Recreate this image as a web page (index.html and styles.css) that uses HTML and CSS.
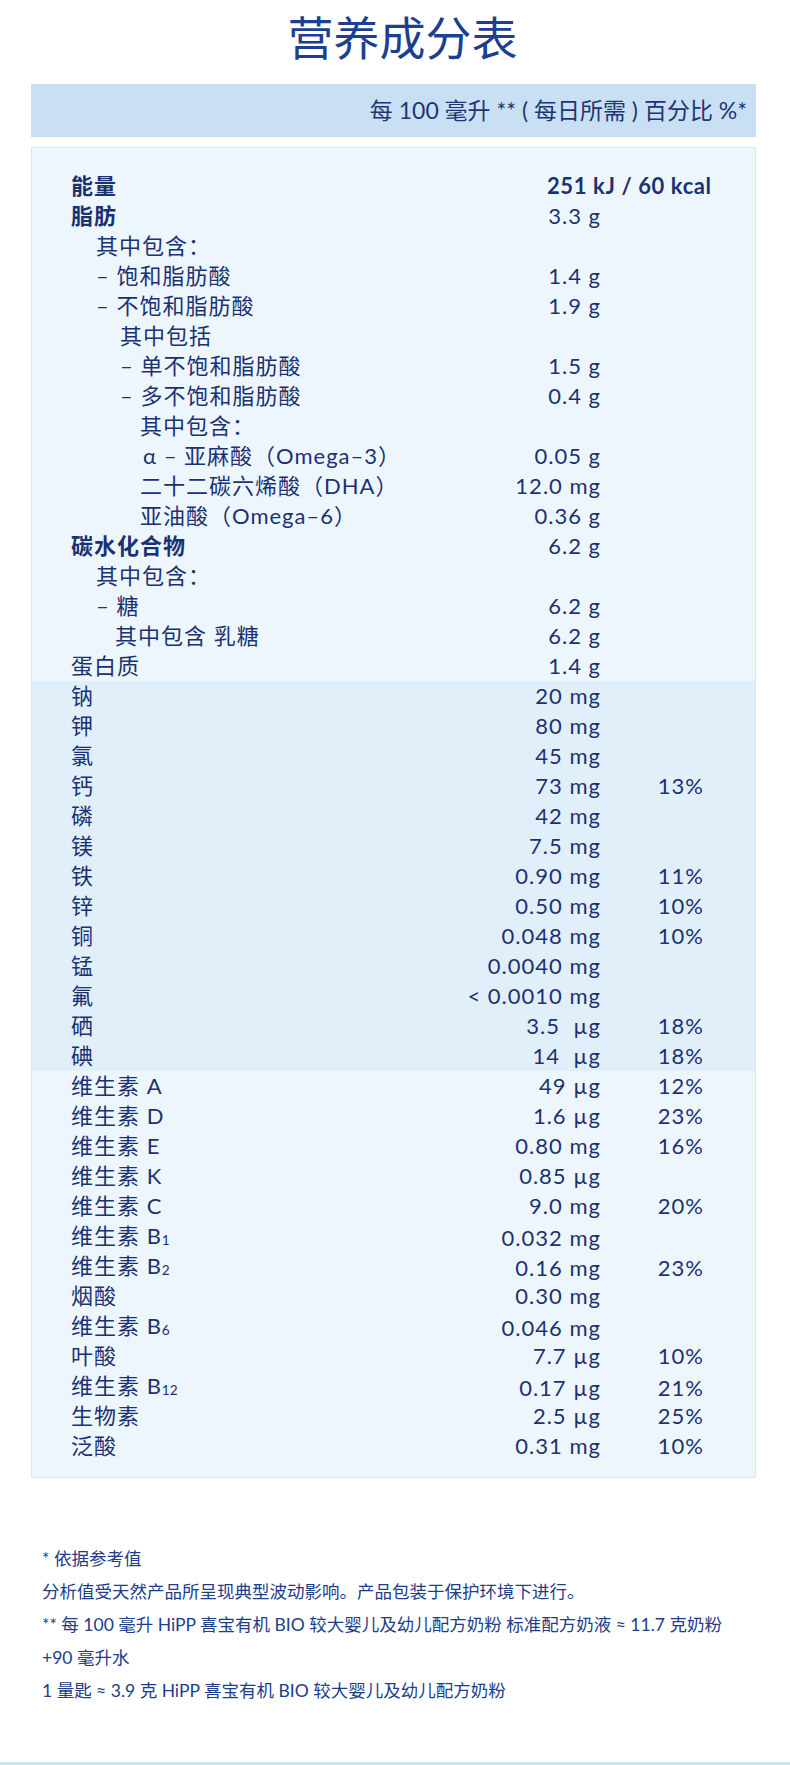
FILE: index.html
```html
<!DOCTYPE html>
<html lang="zh-CN">
<head>
<meta charset="utf-8">
<title>营养成分表</title>
<link rel="stylesheet" href="styles.css">
</head>
<body>
<div class="page">
  <h1 class="title">营养成分表</h1>
  <div class="head-bar">每 100 毫升 ** ( 每日所需 ) 百分比 %*</div>
  <div class="table">
    <div class="group">
      <div class="row bold"><span class="label">能量</span><span class="val energy">251 kJ / 60 kcal</span></div>
      <div class="row bold"><span class="label">脂肪</span><span class="val">3.3 g</span><span class="pct"></span></div>
      <div class="row"><span class="label i1">其中包含：</span><span class="val"></span><span class="pct"></span></div>
      <div class="row"><span class="label i1">– 饱和脂肪酸</span><span class="val">1.4 g</span><span class="pct"></span></div>
      <div class="row"><span class="label i1">– 不饱和脂肪酸</span><span class="val">1.9 g</span><span class="pct"></span></div>
      <div class="row"><span class="label i2">其中包括</span><span class="val"></span><span class="pct"></span></div>
      <div class="row"><span class="label i2">– 单不饱和脂肪酸</span><span class="val">1.5 g</span><span class="pct"></span></div>
      <div class="row"><span class="label i2">– 多不饱和脂肪酸</span><span class="val">0.4 g</span><span class="pct"></span></div>
      <div class="row"><span class="label i3">其中包含：</span><span class="val"></span><span class="pct"></span></div>
      <div class="row"><span class="label i3a">α – 亚麻酸（Omega–3）</span><span class="val">0.05 g</span><span class="pct"></span></div>
      <div class="row"><span class="label i3">二十二碳六烯酸（DHA）</span><span class="val">12.0 mg</span><span class="pct"></span></div>
      <div class="row"><span class="label i3">亚油酸（Omega–6）</span><span class="val">0.36 g</span><span class="pct"></span></div>
      <div class="row bold"><span class="label">碳水化合物</span><span class="val">6.2 g</span><span class="pct"></span></div>
      <div class="row"><span class="label i1">其中包含：</span><span class="val"></span><span class="pct"></span></div>
      <div class="row"><span class="label i1">– 糖</span><span class="val">6.2 g</span><span class="pct"></span></div>
      <div class="row"><span class="label i15">其中包含 乳糖</span><span class="val">6.2 g</span><span class="pct"></span></div>
      <div class="row"><span class="label">蛋白质</span><span class="val">1.4 g</span><span class="pct"></span></div>
    </div>
    <div class="group minerals">
      <div class="row"><span class="label">钠</span><span class="val">20 mg</span><span class="pct"></span></div>
      <div class="row"><span class="label">钾</span><span class="val">80 mg</span><span class="pct"></span></div>
      <div class="row"><span class="label">氯</span><span class="val">45 mg</span><span class="pct"></span></div>
      <div class="row"><span class="label">钙</span><span class="val">73 mg</span><span class="pct">13%</span></div>
      <div class="row"><span class="label">磷</span><span class="val">42 mg</span><span class="pct"></span></div>
      <div class="row"><span class="label">镁</span><span class="val">7.5 mg</span><span class="pct"></span></div>
      <div class="row"><span class="label">铁</span><span class="val">0.90 mg</span><span class="pct">11%</span></div>
      <div class="row"><span class="label">锌</span><span class="val">0.50 mg</span><span class="pct">10%</span></div>
      <div class="row"><span class="label">铜</span><span class="val">0.048 mg</span><span class="pct">10%</span></div>
      <div class="row"><span class="label">锰</span><span class="val">0.0040 mg</span><span class="pct"></span></div>
      <div class="row"><span class="label">氟</span><span class="val">&lt; 0.0010 mg</span><span class="pct"></span></div>
      <div class="row"><span class="label">硒</span><span class="val">3.5&nbsp; µg</span><span class="pct">18%</span></div>
      <div class="row"><span class="label">碘</span><span class="val">14&nbsp; µg</span><span class="pct">18%</span></div>
    </div>
    <div class="group">
      <div class="row"><span class="label">维生素 A</span><span class="val">49 µg</span><span class="pct">12%</span></div>
      <div class="row"><span class="label">维生素 D</span><span class="val">1.6 µg</span><span class="pct">23%</span></div>
      <div class="row"><span class="label">维生素 E</span><span class="val">0.80 mg</span><span class="pct">16%</span></div>
      <div class="row"><span class="label">维生素 K</span><span class="val">0.85 µg</span><span class="pct"></span></div>
      <div class="row"><span class="label">维生素 C</span><span class="val">9.0 mg</span><span class="pct">20%</span></div>
      <div class="row"><span class="label">维生素 B<span class="sub">1</span></span><span class="val">0.032 mg</span><span class="pct"></span></div>
      <div class="row"><span class="label">维生素 B<span class="sub">2</span></span><span class="val">0.16 mg</span><span class="pct">23%</span></div>
      <div class="row"><span class="label">烟酸</span><span class="val">0.30 mg</span><span class="pct"></span></div>
      <div class="row"><span class="label">维生素 B<span class="sub">6</span></span><span class="val">0.046 mg</span><span class="pct"></span></div>
      <div class="row"><span class="label">叶酸</span><span class="val">7.7 µg</span><span class="pct">10%</span></div>
      <div class="row"><span class="label">维生素 B<span class="sub">12</span></span><span class="val">0.17 µg</span><span class="pct">21%</span></div>
      <div class="row"><span class="label">生物素</span><span class="val">2.5 µg</span><span class="pct">25%</span></div>
      <div class="row"><span class="label">泛酸</span><span class="val">0.31 mg</span><span class="pct">10%</span></div>
    </div>
  </div>
  <div class="notes">
    <p>* 依据参考值</p>
    <p>分析值受天然产品所呈现典型波动影响。产品包装于保护环境下进行。</p>
    <p>** 每 100 毫升 HiPP 喜宝有机 BIO 较大婴儿及幼儿配方奶粉 标准配方奶液 ≈ 11.7 克奶粉<br>+90 毫升水</p>
    <p>1 量匙 ≈ 3.9 克 HiPP 喜宝有机 BIO 较大婴儿及幼儿配方奶粉</p>
  </div>
</div>
<div class="bottom-bar"></div>
</body>
</html>
```

FILE: styles.css
```css
html, body {
  margin: 0;
  padding: 0;
  background: #ffffff;
}

body {
  width: 790px;
  font-family: "Lato", "Noto Sans CJK SC", sans-serif;
  color: #1b3272;
}

.page {
  padding: 0 34px 0 31px;
}

.title {
  margin: 0;
  padding-top: 8px;
  padding-left: 18px;
  height: 74px;
  box-sizing: border-box;
  text-align: center;
  font-family: "Noto Sans CJK SC", sans-serif;
  font-weight: 400;
  font-size: 46px;
  line-height: 54px;
  color: #1d3f92;
}

.head-bar {
  margin-top: 10px;
  height: 53px;
  background: #c9e0f4;
  text-align: right;
  font-size: 23px;
  line-height: 53px;
  padding-right: 9px;
  color: #1d3673;
}

.table {
  margin-top: 10px;
  background: #eef6fd;
  border: 1px solid #d6e8f7;
  padding: 23px 0 16px;
}

.minerals {
  background: #e1effa;
}

.row {
  display: grid;
  grid-template-columns: 1fr 170px 103px;
  height: 30px;
  align-items: center;
  padding: 0 51px 0 39px;
  font-size: 22px;
  letter-spacing: 1px;
  line-height: 30px;
  white-space: nowrap;
}

.row.bold {
  font-weight: 700;
}

.val, .pct {
  text-align: right;
}

.val.energy {
  grid-column: 2 / 4;
  text-align: left;
  padding-left: 116px;
  letter-spacing: 0.6px;
}

.row.bold .val:not(.energy) {
  font-weight: 400;
}

.i1 { padding-left: 25px; }
.i15 { padding-left: 44px; }
.i2 { padding-left: 49px; }
.i3 { padding-left: 69px; }
.i3a { padding-left: 72px; }

.sub {
  font-size: 0.62em;
  vertical-align: -1px;
  letter-spacing: 0;
}

.notes {
  margin-top: 64px;
  padding-left: 11px;
  font-size: 17.5px;
  line-height: 33px;
  color: #213d8a;
}

.notes p {
  margin: 0;
}

.bottom-bar {
  margin-top: 55px;
  height: 3px;
  background: #c9e6f4;
}
```
